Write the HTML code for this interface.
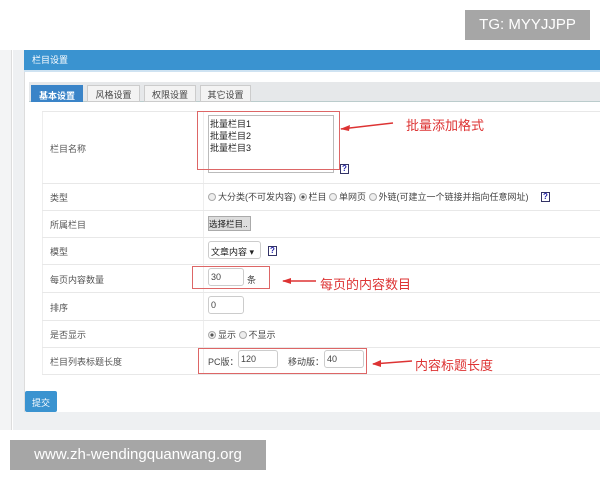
<!DOCTYPE html>
<html><head><meta charset="utf-8"><style>
*{margin:0;padding:0;box-sizing:border-box}
body{width:600px;height:480px;position:relative;background:#fff;font-family:"Liberation Sans","Noto Sans CJK SC",sans-serif;font-size:9px;color:#444;overflow:hidden}
.a{position:absolute;white-space:nowrap}
.row{position:absolute;left:42px;width:558px;border-top:1px solid #e8e8e8}
.lbl{position:absolute;left:50px;font-size:9px;color:#555;white-space:nowrap}
.q{position:absolute;width:9px;height:10px;border:1px solid #336;background:#fff;color:#22a;font-size:8px;font-weight:bold;line-height:8px;text-align:center}
.rad{display:inline-block;width:8px;height:8px;border:1px solid #aaa;border-radius:50%;background:#eee;vertical-align:-1px;margin-right:2px}
.rad.on{background:radial-gradient(#555 35%,#eee 40%)}
.inp{position:absolute;border:1px solid #ccc;border-radius:3px;background:#fff;height:18px;font-size:9px;padding:3px 2px;color:#444;white-space:nowrap}
.red{position:absolute;border:1px solid #d66}
.ann{position:absolute;color:#d33;font-size:13px;white-space:nowrap}
.tab{position:absolute;top:85px;height:17px;background:#f3f3f3;border:1px solid #ccc;padding:2px 0;text-align:center;white-space:nowrap;font-size:9px}
</style></head><body>
<div class="a" style="left:0;top:50px;width:12px;height:380px;background:#f3f4f5;border-right:1px solid #ddd"></div>
<div class="a" style="left:13px;top:50px;width:587px;height:380px;background:#eef0f2"></div>
<div class="a" style="left:24px;top:50px;width:576px;height:362px;background:#fff;border-left:1px solid #ddd"></div>
<div class="a" style="left:24px;top:50px;width:576px;height:20px;background:#3a93d0;color:#fff;padding:3px 8px;font-size:9px">栏目设置</div>
<div class="a" style="left:24px;top:70px;width:576px;height:2px;background:#cfe3f2"></div>
<div class="a" style="left:29px;top:82px;width:571px;height:20px;background:#e6e8ea;border-bottom:1px solid #bcc"></div>
<div class="tab" style="left:31px;width:52px;background:#3a84c8;color:#fff;font-weight:bold;border-color:#3a84c8;padding-top:3px">基本设置</div>
<div class="tab" style="left:87px;width:53px">风格设置</div>
<div class="tab" style="left:144px;width:52px">权限设置</div>
<div class="tab" style="left:200px;width:51px">其它设置</div>
<div class="a" style="left:42px;top:111px;width:558px;height:264px;border-left:1px solid #eee"></div>
<div class="a" style="left:203px;top:111px;width:1px;height:264px;background:#eee"></div>
<div class="row" style="top:111px"></div>
<div class="row" style="top:183px"></div>
<div class="row" style="top:210px"></div>
<div class="row" style="top:237px"></div>
<div class="row" style="top:264px"></div>
<div class="row" style="top:292px"></div>
<div class="row" style="top:320px"></div>
<div class="row" style="top:347px"></div>
<div class="row" style="top:374px"></div>
<div class="lbl" style="top:142px">栏目名称</div>
<div class="lbl" style="top:191px">类型</div>
<div class="lbl" style="top:218px">所属栏目</div>
<div class="lbl" style="top:245px">模型</div>
<div class="lbl" style="top:273px">每页内容数量</div>
<div class="lbl" style="top:301px">排序</div>
<div class="lbl" style="top:328px">是否显示</div>
<div class="lbl" style="top:355px">栏目列表标题长度</div>
<div class="a" style="left:208px;top:115px;width:126px;height:58px;border:1px solid #bbb;padding:2px 1px;font-size:9px;line-height:12px;color:#222">批量栏目1<br>批量栏目2<br>批量栏目3</div>
<div class="red" style="left:197px;top:111px;width:143px;height:59px"></div>
<div class="q" style="left:340px;top:164px">?</div>
<div class="ann" style="left:406px;top:115px">批量添加格式</div>
<svg class="a" style="left:338px;top:120px" width="60" height="14"><path d="M3 9 L55 3" stroke="#d33" stroke-width="1.5"/><path d="M2 9 L12 5 L11 11Z" fill="#d33"/></svg>
<div class="a" style="left:208px;top:190px;font-size:9px"><span class="rad"></span>大分类(不可发内容) <span class="rad on"></span>栏目 <span class="rad"></span>单网页 <span class="rad"></span>外链(可建立一个链接并指向任意网址)</div>
<div class="q" style="left:541px;top:192px">?</div>
<div class="a" style="left:208px;top:216px;width:43px;height:15px;background:#ddd;border:1px solid #aaa;padding:1px 0;color:#222;font-size:8.5px;overflow:hidden">选择栏目..</div>
<div class="inp" style="left:208px;top:241px;width:53px;color:#222">文章内容 ▾</div>
<div class="q" style="left:268px;top:246px">?</div>
<div class="inp" style="left:208px;top:268px;width:36px">30</div>
<div class="a" style="left:247px;top:273px">条</div>
<div class="red" style="left:192px;top:266px;width:78px;height:23px"></div>
<div class="ann" style="left:320px;top:274px">每页的内容数目</div>
<svg class="a" style="left:280px;top:276px" width="40" height="10"><path d="M3 5 L36 5" stroke="#d33" stroke-width="1.5"/><path d="M2 5 L11 2 L11 8Z" fill="#d33"/></svg>
<div class="inp" style="left:208px;top:296px;width:36px">0</div>
<div class="a" style="left:208px;top:328px"><span class="rad on"></span>显示 <span class="rad"></span>不显示</div>
<div class="a" style="left:208px;top:355px">PC版：</div>
<div class="inp" style="left:238px;top:350px;width:40px">120</div>
<div class="a" style="left:288px;top:355px">移动版：</div>
<div class="inp" style="left:324px;top:350px;width:40px">40</div>
<div class="red" style="left:198px;top:348px;width:169px;height:26px"></div>
<div class="ann" style="left:415px;top:355px">内容标题长度</div>
<svg class="a" style="left:370px;top:358px" width="46" height="10"><path d="M3 6 L42 3" stroke="#d33" stroke-width="1.5"/><path d="M2 6 L11 2 L11 9Z" fill="#d33"/></svg>
<div class="a" style="left:25px;top:391px;width:32px;height:21px;background:#3a93d0;border-radius:2px;color:#fff;padding:5px 7px">提交</div>
<div class="a" style="left:465px;top:10px;width:125px;height:30px;background:#a6a6a6;color:#fff;font-size:15px;line-height:30px;text-align:center">TG: MYYJJPP</div>
<div class="a" style="left:10px;top:440px;width:256px;height:30px;background:#a6a6a6;color:#fff;font-size:15px;line-height:30px;text-align:center">www.zh-wendingquanwang.org</div>
</body></html>
